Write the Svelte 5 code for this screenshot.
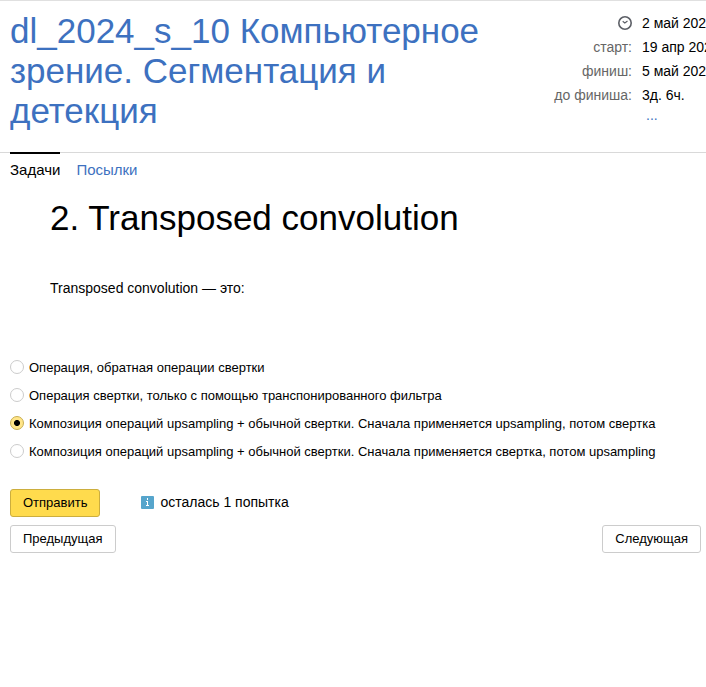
<script>
  const schedule = [
    { label: 'старт:', value: '19 апр 2024' },
    { label: 'финиш:', value: '5 май 2024' },
    { label: 'до финиша:', value: '3д. 6ч.' }
  ];
  const options = [
    'Операция, обратная операции свертки',
    'Операция свертки, только с помощью транспонированного фильтра',
    'Композиция операций upsampling + обычной свертки. Сначала применяется upsampling, потом свертка',
    'Композиция операций upsampling + обычной свертки. Сначала применяется свертка, потом upsampling'
  ];
  let answer = $state(2);
</script>

<div class="page">
  <header>
    <h1><a href="#contest">dl_2024_s_10 Компьютерное зрение. Сегментация и детекция</a></h1>
    <div class="times">
      <dl>
        <dt>
          <svg width="14" height="14" viewBox="0 0 14 14" role="img" aria-label="Сейчас">
            <circle cx="7" cy="7" r="6.2" fill="none" stroke="#5c5f66" stroke-width="1.6" />
            <path d="M4.7 5.3 6.8 7 9.5 5" fill="none" stroke="#5c5f66" stroke-width="1.1" />
          </svg>
        </dt>
        <dd>2 май 2024</dd>
        {#each schedule as row}
          <dt>{row.label}</dt>
          <dd>{row.value}</dd>
        {/each}
      </dl>
      <a class="more" href="#details">...</a>
    </div>
  </header>

  <nav>
    <a class="tab active" href="#problems">Задачи</a>
    <a class="tab" href="#submits">Посылки</a>
  </nav>

  <main>
    <section>
      <h2>2. Transposed convolution</h2>
      <p>Transposed convolution — это:</p>
    </section>

    <form onsubmit={(e) => e.preventDefault()}>
      <div class="options">
        {#each options as text, i}
          <label>
            <input type="radio" name="answer" value={i} bind:group={answer} />
            <span>{text}</span>
          </label>
        {/each}
      </div>
      <div class="submit">
        <button class="primary" type="submit">Отправить</button>
        <div class="attempts">
          <svg width="13" height="13" viewBox="0 0 13 13" aria-hidden="true">
            <rect width="13" height="13" rx="1" fill="#56a5cc" />
            <path d="M6 2h1v2H6zM5 5h2v4h1v1H5V9h1V6H5z" fill="#fff" />
          </svg>
          <span>осталась 1 попытка</span>
        </div>
      </div>
      <div class="pager">
        <button type="button">Предыдущая</button>
        <button type="button">Следующая</button>
      </div>
    </form>
  </main>
</div>

<style>
  .page {
    overflow: hidden;
    border-top: 1px solid #e0e0e0;
    background: #fff;
    color: #000;
    font: 14px/24px Arial, 'Liberation Sans', sans-serif;
  }
  a {
    color: #3d71c0;
    text-decoration: none;
  }
  header {
    display: flex;
    justify-content: space-between;
    padding: 10px 0 21px 10px;
  }
  h1 {
    flex: 1;
    max-width: 490px;
    margin: 0;
    font-size: 35px;
    font-weight: 400;
    line-height: 40px;
  }
  .times {
    flex: none;
    width: 152px;
    white-space: nowrap;
  }
  dl {
    display: grid;
    grid-template-columns: 78px 64px;
    gap: 0 10px;
    margin: 0;
  }
  dt {
    color: #666;
    text-align: right;
  }
  dt svg {
    vertical-align: -2px;
  }
  dd {
    margin: 0;
  }
  .more {
    display: block;
    padding-left: 92px;
    line-height: 16px;
  }
  nav {
    display: flex;
    gap: 16px;
    padding-left: 10px;
    border-top: 1px solid #d9d9d9;
    font-size: 15px;
  }
  .tab {
    padding-top: 5px;
  }
  .active {
    margin-top: -1px;
    padding-top: 4px;
    border-top: 2px solid #000;
    color: #000;
  }
  section {
    padding: 12px 50px 0;
  }
  h2 {
    margin: 0;
    font-size: 35px;
    font-weight: 400;
    line-height: 48px;
  }
  p {
    margin: 34px 0 0;
  }
  form {
    padding: 54px 5px 0 10px;
    font-size: 13px;
  }
  .options {
    display: flex;
    flex-direction: column;
  }
  label {
    display: flex;
    align-items: flex-start;
    gap: 5px;
    line-height: 28px;
  }
  input {
    appearance: none;
    flex: none;
    box-sizing: border-box;
    width: 14px;
    height: 14px;
    margin: 6px 0 0;
    border: 1px solid #ccc;
    border-radius: 50%;
    background: #fff;
  }
  input:checked {
    border-color: #c9ae4e;
    background: radial-gradient(circle, #000 0 2.6px, #ffe589 3.4px);
  }
  .submit {
    display: flex;
    align-items: flex-start;
    gap: 41px;
    padding-top: 23px;
  }
  .attempts {
    display: flex;
    align-items: center;
    gap: 6px;
    font-size: 14px;
    line-height: 26px;
  }
  .pager {
    display: flex;
    justify-content: space-between;
    padding-top: 8px;
  }
  button {
    box-sizing: border-box;
    height: 28px;
    padding: 0 12px;
    border: 1px solid #ccc;
    border-radius: 3px;
    background: #fff;
    color: #000;
    font: inherit;
  }
  .primary {
    border-color: #ccae3e;
    background: #ffdb4d;
  }
</style>
